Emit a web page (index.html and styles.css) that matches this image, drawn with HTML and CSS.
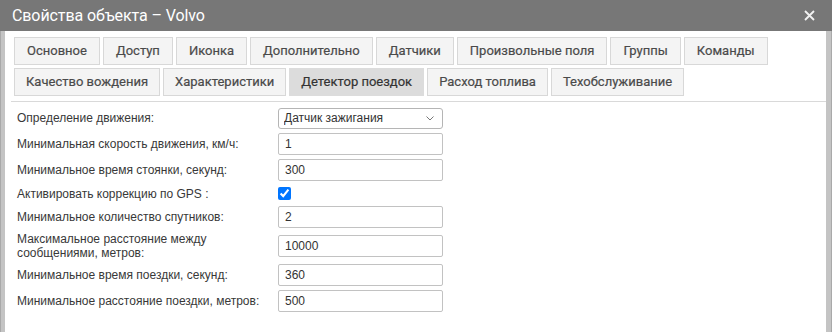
FILE: index.html
```html
<!DOCTYPE html>
<html lang="ru">
<head>
    <meta charset="UTF-8">
    <title>Свойства объекта – Volvo</title>
    <link rel="stylesheet" href="styles.css">
</head>
<body>
<div class="dialog">
    <div class="titlebar">
        <span class="title">Свойства объекта – Volvo</span>
        <button class="close" title="Закрыть">
            <svg width="11" height="11" viewBox="0 0 11 11"><path d="M1 1 L10 10 M10 1 L1 10" stroke="#f2f2f2" stroke-width="1.8"/></svg>
        </button>
    </div>
    <div class="frame">
        <div class="content">
            <div class="tabs">
                <div class="tab-row">
                    <span class="tab">Основное</span>
                    <span class="tab">Доступ</span>
                    <span class="tab">Иконка</span>
                    <span class="tab">Дополнительно</span>
                    <span class="tab">Датчики</span>
                    <span class="tab">Произвольные поля</span>
                    <span class="tab">Группы</span>
                    <span class="tab">Команды</span>
                </div>
                <div class="tab-row tab-row-tight">
                    <span class="tab">Качество вождения</span>
                    <span class="tab">Характеристики</span>
                    <span class="tab active">Детектор поездок</span>
                    <span class="tab">Расход топлива</span>
                    <span class="tab">Техобслуживание</span>
                </div>
            </div>

            <div class="form">
                <label class="row">
                    <span class="label">Определение движения:</span>
                    <span class="select-wrap">
                        <select class="field">
                            <option>Датчик зажигания</option>
                        </select>
                        <svg class="chevron" width="8" height="5" viewBox="0 0 8 5"><path d="M0.5 0.5 L4 4 L7.5 0.5" fill="none" stroke="#777" stroke-width="1"/></svg>
                    </span>
                </label>
                <label class="row">
                    <span class="label">Минимальная скорость движения, км/ч:</span>
                    <input class="field" type="text" value="1">
                </label>
                <label class="row">
                    <span class="label">Минимальное время стоянки, секунд:</span>
                    <input class="field" type="text" value="300">
                </label>
                <label class="row row-check">
                    <span class="label">Активировать коррекцию по GPS :</span>
                    <input class="check" type="checkbox" checked>
                </label>
                <label class="row">
                    <span class="label">Минимальное количество спутников:</span>
                    <input class="field" type="text" value="2">
                </label>
                <label class="row row-tall">
                    <span class="label">Максимальное расстояние между<br>сообщениями, метров:</span>
                    <input class="field" type="text" value="10000">
                </label>
                <label class="row">
                    <span class="label">Минимальное время поездки, секунд:</span>
                    <input class="field" type="text" value="360">
                </label>
                <label class="row">
                    <span class="label">Минимальное расстояние поездки, метров:</span>
                    <input class="field" type="text" value="500">
                </label>
            </div>
        </div>
    </div>
</div>
</body>
</html>
```

FILE: styles.css
```css
* {
    box-sizing: border-box;
}

html, body {
    margin: 0;
    padding: 0;
    height: 100%;
    overflow: hidden;
}

body {
    font-family: 'Liberation Sans', Arial, sans-serif;
    background: #fff;
}

.dialog {
    display: flex;
    flex-direction: column;
    height: 100%;
}

.titlebar {
    height: 31px;
    background: #777777;
    color: #fff;
    display: flex;
    align-items: center;
    justify-content: space-between;
    padding: 0 17px 0 12px;
}

.title {
    font-family: Roboto, 'Liberation Sans', sans-serif;
    font-size: 16px;
    letter-spacing: -0.1px;
}

.close {
    background: none;
    border: none;
    padding: 0;
    width: 11px;
    height: 11px;
    display: flex;
    cursor: pointer;
}

.frame {
    flex-grow: 1;
    background: #c4c4c4;
    border-left: 1px solid #a9a9a9;
    border-right: 1px solid #a9a9a9;
    padding: 0 5px 0 4px;
    display: flex;
}

.content {
    flex-grow: 1;
    background: #fff;
    padding: 0 0 0 6px;
}

.tabs {
    padding: 6px 0 5px 3px;
    border-bottom: 1px solid #d9d9d9;
    margin-bottom: 5px;
}

.tab-row {
    display: flex;
    gap: 3px;
    margin-bottom: 3px;
}

.tab-row:last-child {
    margin-bottom: 0;
}

.tab {
    height: 28px;
    line-height: 26px;
    padding: 0 12px;
    border: 1px solid #d8d8d8;
    background: #f4f4f4;
    color: #4a4a4a;
    font-family: Roboto, 'Liberation Sans', sans-serif;
    font-size: 13px;
    -webkit-text-stroke: 0.2px #4a4a4a;
    white-space: nowrap;
}

.tab-row-tight .tab {
    padding: 0 11px;
}

.tab.active {
    background: #dcdcdc;
    border-color: #dcdcdc;
    color: #333;
    -webkit-text-stroke: 0.2px #333;
}

.form {
    padding-left: 6px;
    display: flex;
    flex-direction: column;
    gap: 4px;
}

.row {
    display: flex;
    align-items: center;
    height: 22px;
    font-size: 12px;
    color: #383838;
}

.row-check {
    height: 17px;
}

.row-tall {
    height: 28px;
}

.label {
    width: 261px;
    line-height: 14px;
}

.field {
    width: 165px;
    height: 22px;
    border: 1px solid #c2c2c2;
    border-radius: 2px;
    padding: 0 6px;
    font-family: 'Liberation Sans', Arial, sans-serif;
    font-size: 12px;
    color: #333;
    background: #fff;
}

.select-wrap {
    position: relative;
    display: flex;
}

select.field {
    -webkit-appearance: none;
    appearance: none;
    height: 21px;
    padding: 0 5px;
    border-color: #b5b5b5;
    border-radius: 3px;
}

.chevron {
    position: absolute;
    right: 9px;
    top: 8px;
    pointer-events: none;
}

.check {
    margin: 0;
    width: 13px;
    height: 13px;
    accent-color: #0075ff;
}
```
